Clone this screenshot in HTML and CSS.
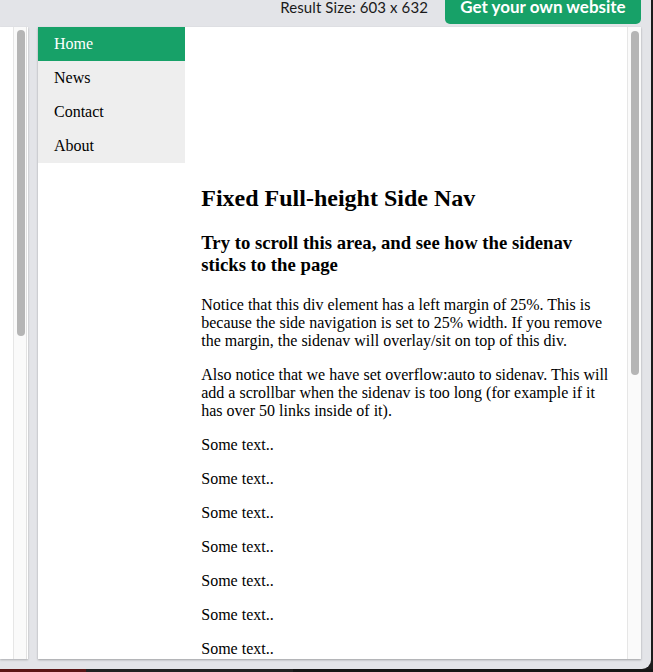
FILE: index.html
```
<!DOCTYPE html>
<html>
<head>
<meta charset="utf-8">
<link rel="stylesheet" href="styles.css">
</head>
<body>
<div class="window">
  <div class="topbar">
    <span class="result-size">Result Size: 603 x 632</span>
    <a class="own-btn">Get your own website</a>
  </div>
  <div class="main">
    <div class="left-panel">
      <div class="left-white"></div>
      <div class="track track-left"><div class="thumb thumb-left"></div></div>
    </div>
    <div class="frame">
      <div class="page">
        <ul class="sidenav">
          <li><a class="active">Home</a></li>
          <li><a>News</a></li>
          <li><a>Contact</a></li>
          <li><a>About</a></li>
        </ul>
        <div class="content">
          <h2>Fixed Full-height Side Nav</h2>
          <h3>Try to scroll this area, and see how the sidenav sticks to the page</h3>
          <p>Notice that this div element has a left margin of 25%. This is because the side navigation is set to 25% width. If you remove the margin, the sidenav will overlay/sit on top of this div.</p>
          <p>Also notice that we have set overflow:auto to sidenav. This will add a scrollbar when the sidenav is too long (for example if it has over 50 links inside of it).</p>
          <p>Some text..</p>
          <p>Some text..</p>
          <p>Some text..</p>
          <p>Some text..</p>
          <p>Some text..</p>
          <p>Some text..</p>
          <p>Some text..</p>
          <p>Some text..</p>
          <p>Some text..</p>
        </div>
      </div>
      <div class="track track-right"><div class="thumb thumb-right"></div></div>
    </div>
  </div>
</div>
<div class="taskbar">
  <div class="tb-red"></div>
  <div class="tb-mid"></div>
  <div class="tb-rest"></div>
</div>
</body>
</html>
```

FILE: styles.css
```
html, body {
  margin: 0;
  padding: 0;
}
body {
  background: #1c1c1c;
  width: 653px;
  height: 672px;
  overflow: hidden;
  position: relative;
}
.window {
  width: 651px;
  height: 669px;
  background: #e3e4e8;
  border-bottom-right-radius: 9px;
  display: flex;
  flex-direction: column;
  overflow: hidden;
}
.topbar {
  height: 27px;
  flex: none;
  display: flex;
  justify-content: flex-end;
  align-items: flex-start;
  padding-right: 10px;
  box-sizing: border-box;
}
.result-size {
  font-family: Lato, "Open Sans", sans-serif;
  font-size: 15px;
  line-height: 14px;
  color: #1a1a1a;
  margin-right: 17px;
  letter-spacing: 0.1px;
}
.own-btn {
  display: block;
  height: 24px;
  width: 196px;
  box-sizing: border-box;
  background: #17a168;
  color: #fff;
  font-family: Lato, "Open Sans", sans-serif;
  font-weight: 700;
  font-size: 17px;
  line-height: 14px;
  text-align: center;
  border-radius: 0 0 5px 5px;
  letter-spacing: 0;
}
.main {
  flex: 1;
  display: flex;
  align-items: flex-start;
}
.left-panel {
  width: 28px;
  height: 632px;
  display: flex;
  background: #fff;
  box-shadow: 0 1px 2px rgba(0,0,0,0.25);
}
.left-white {
  width: 13px;
}
.track {
  width: 14px;
  box-sizing: border-box;
  background: #fafafa;
  border-left: 1px solid #e6e6e6;
  padding: 3px 0 0 3px;
}
.track-left {
  border-right: 1px solid #e2e2e2;
}
.thumb {
  width: 8px;
  background: #b5b5b5;
  border-radius: 4px;
}
.thumb-left {
  height: 306px;
}
.thumb-right {
  height: 344px;
  margin-top: 1px;
}
.frame {
  margin-left: 10px;
  width: 603px;
  height: 632px;
  display: flex;
  background: #fff;
  box-shadow: 0 1px 2px rgba(0,0,0,0.3);
}
.page {
  flex: 1;
  overflow: hidden;
  font-family: "Liberation Serif", "Times New Roman", serif;
  color: #000;
}
.track-right {
  flex: none;
}
.sidenav {
  list-style: none;
  margin: 0;
  padding: 0;
  width: 25%;
  background: #eeeeee;
}
.sidenav a {
  display: block;
  padding: 7px 8px 7px 16px;
  font-size: 16px;
  line-height: 20px;
  color: #000;
}
.sidenav a.active {
  background: #17a168;
  color: #fff;
}
.content {
  margin-left: 25%;
  padding: 1px 16px;
}
.content h2 {
  font-size: 24px;
  line-height: 28px;
  margin: 20px 0;
}
.content h3 {
  font-size: 18.72px;
  line-height: 22px;
  margin: 18px 0 20px;
}
.content p {
  font-size: 16px;
  line-height: 18px;
  margin: 16px 0;
}
.taskbar {
  display: flex;
  height: 3px;
}
.tb-red {
  width: 86px;
  background: #5a1515;
}
.tb-mid {
  width: 207px;
  background: #222;
}
.tb-rest {
  flex: 1;
  background: #161616;
}
```
